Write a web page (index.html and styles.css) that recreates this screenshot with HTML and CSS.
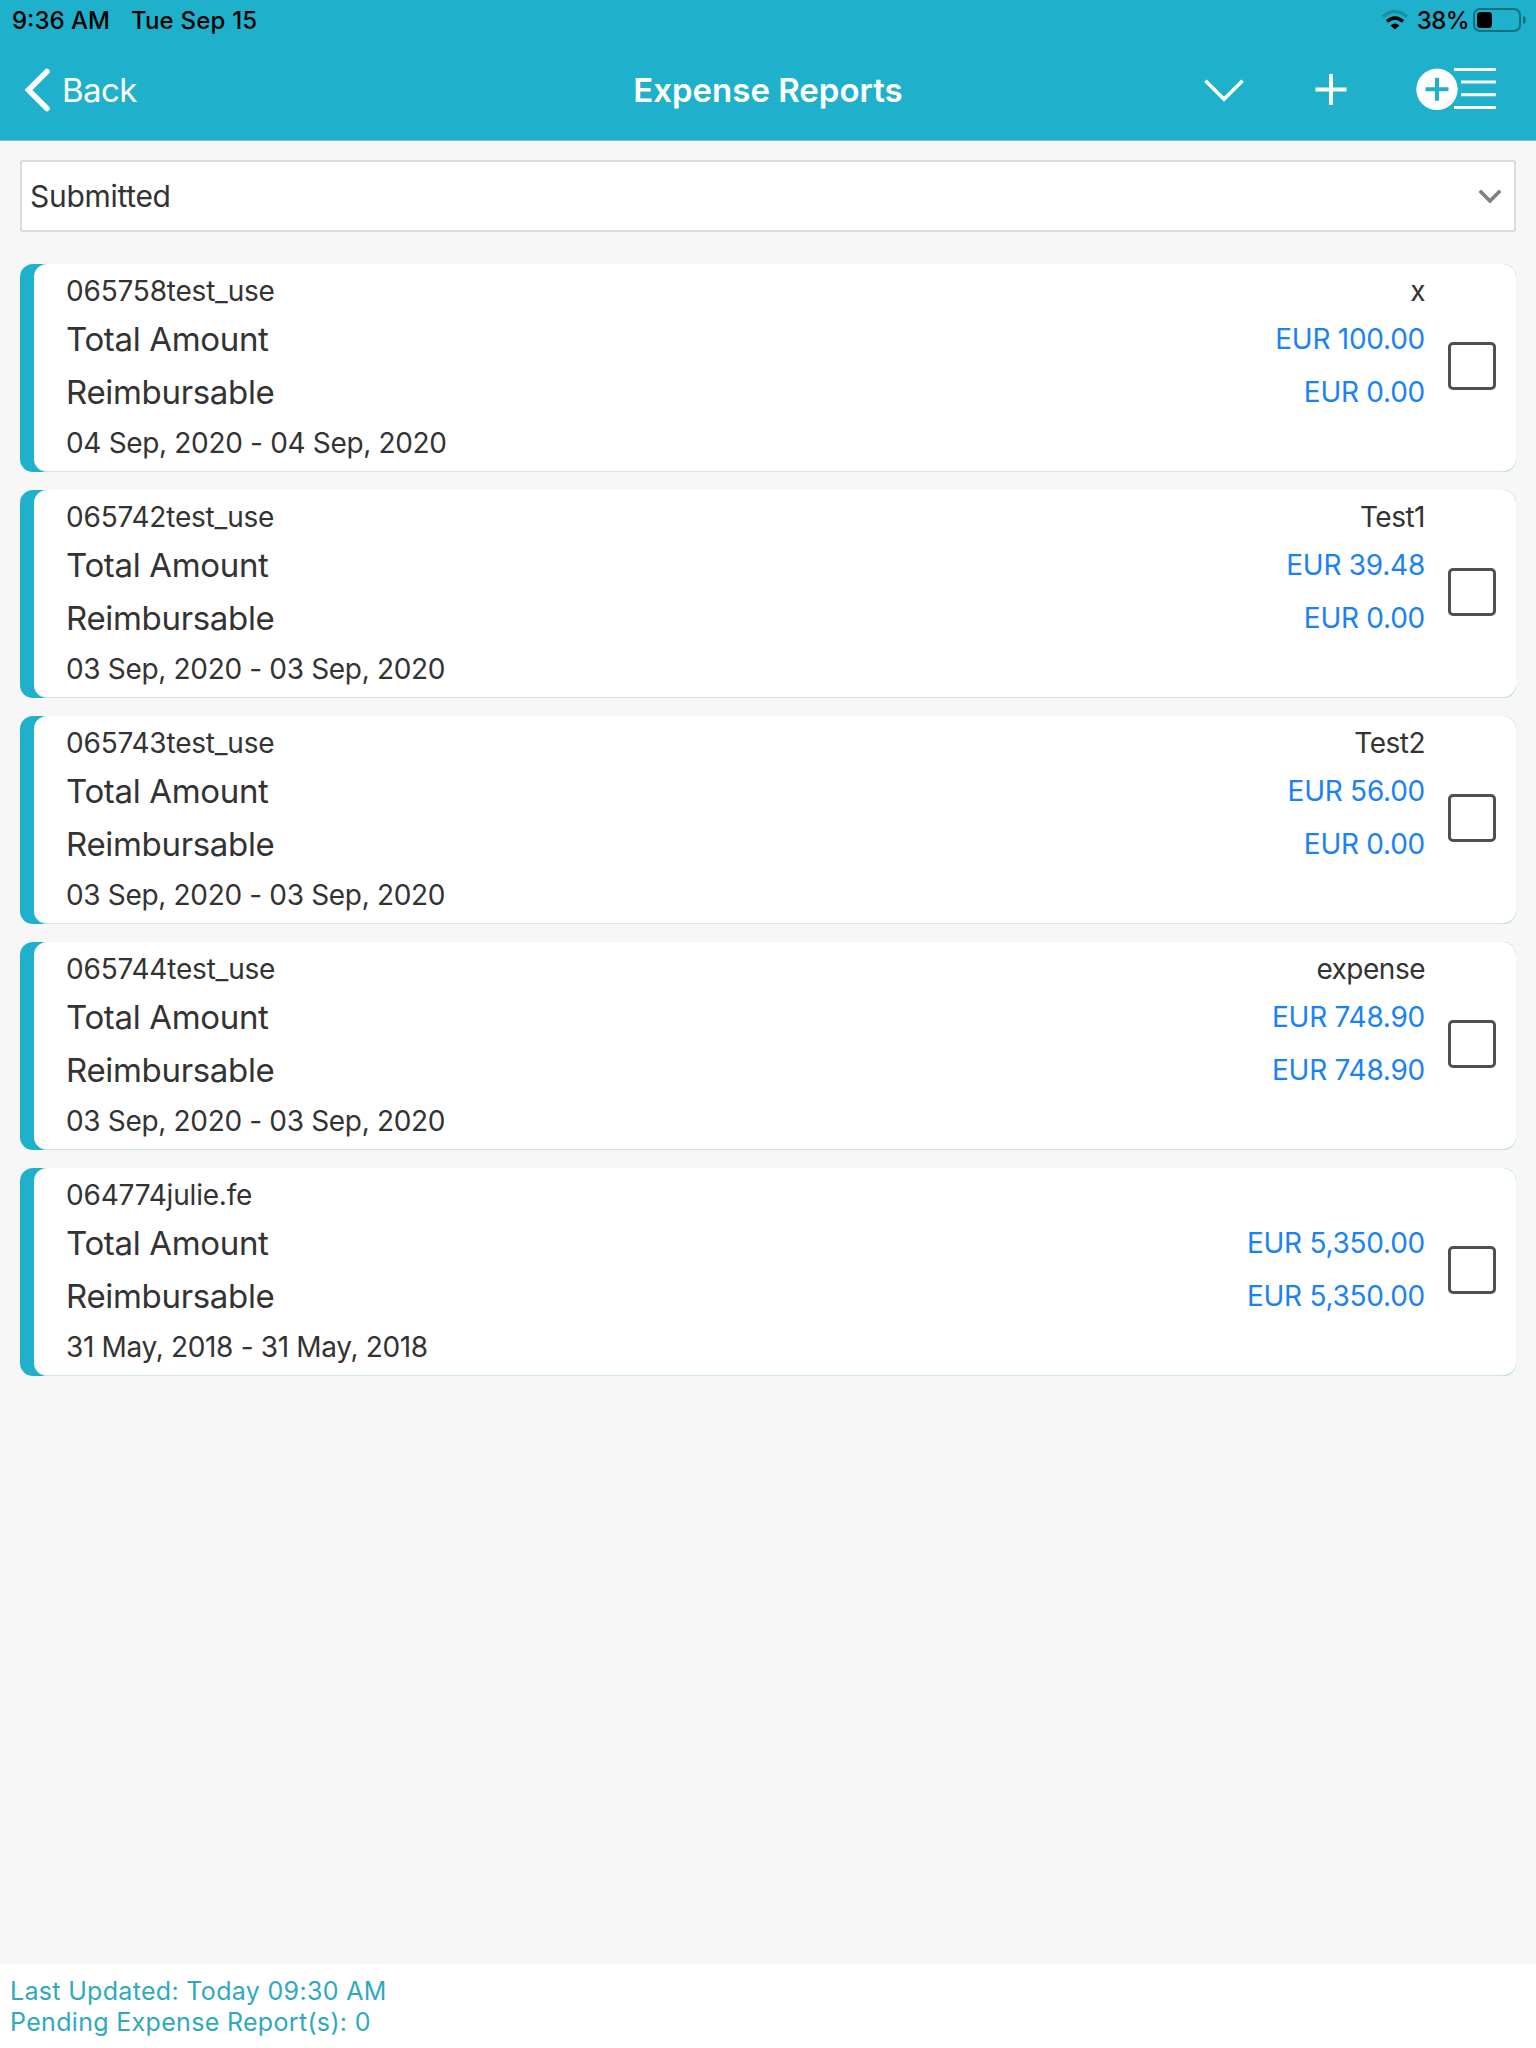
FILE: index.html
```html
<!DOCTYPE html>
<html lang="en">

<head>
    <meta charset="UTF-8">
    <meta name="viewport" content="width=device-width, initial-scale=1.0">
    <title>Expense Reports</title>
    <link rel="stylesheet" href="styles.css">
</head>

<body>
    <header>
        <div class="status-bar">
            <div class="status-left">
                <span class="time">9:36 AM</span>
                <span class="date">Tue Sep 15</span>
            </div>
            <div class="status-right">
                <svg class="wifi" width="28" height="20" viewBox="0 0 28 20">
                    <path d="M2 6.5 Q14 -3.5 26 6.5" fill="none" stroke="#1590a4" stroke-width="3.4" />
                    <path d="M6 11.5 Q14 4.5 22 11.5" fill="none" stroke="#000" stroke-width="3.6" />
                    <path d="M9.6 15.4 Q14 11.6 18.4 15.4 L14 19.6 Z" fill="#000" />
                </svg>
                <span class="percent">38%</span>
                <svg class="battery" width="53" height="24" viewBox="0 0 53 24">
                    <rect x="1" y="1" width="46" height="22" rx="6" fill="none" stroke="#12717f" stroke-width="2" />
                    <rect x="4" y="4" width="15" height="16" rx="3.5" fill="#000" />
                    <path d="M50 8 Q53 9 53 12 Q53 15 50 16 Z" fill="#12717f" />
                </svg>
            </div>
        </div>
        <nav class="nav-bar">
            <a class="back">
                <svg width="26" height="44" viewBox="0 0 26 44">
                    <path d="M22 3.5 L3.5 22 L22 40.5" fill="none" stroke="#fff" stroke-width="5.5" stroke-linecap="round" />
                </svg>
                <span>Back</span>
            </a>
            <h1>Expense Reports</h1>
            <div class="actions">
                <svg width="40" height="24" viewBox="0 0 40 24">
                    <path d="M1.5 2.8 L20 21.3 L38.5 2.8" fill="none" stroke="#fff" stroke-width="3.6" />
                </svg>
                <svg class="plus" width="32" height="32" viewBox="0 0 32 32">
                    <path d="M16 0 V31 M0.5 15.5 H31.5" fill="none" stroke="#fff" stroke-width="4" />
                </svg>
                <svg width="80" height="44" viewBox="0 0 80 44">
                    <circle cx="21" cy="21.3" r="20.7" fill="#fff" />
                    <path d="M21 9.8 V32.8 M9.5 21.3 H32.5" stroke="#1fb1cb" stroke-width="4" />
                    <path d="M38 1.6 H80 M45 14.1 H80 M45 26.8 H80 M38 39.4 H80" stroke="#fff" stroke-width="3" />
                </svg>
            </div>
        </nav>
    </header>

    <main>
        <div class="filter">
            <span>Submitted</span>
            <svg width="24" height="18" viewBox="0 0 24 18">
                <path d="M1.8 3.8 L12 14 L22.2 3.8" fill="none" stroke="#7f7f7f" stroke-width="3.6" />
            </svg>
        </div>

        <div class="reports">
            <div class="card">
                <div class="info">
                    <div class="row small"><span class="code">065758test_use</span><span class="name">x</span></div>
                    <div class="row"><span>Total Amount</span><span class="amount">EUR 100.00</span></div>
                    <div class="row"><span>Reimbursable</span><span class="amount">EUR 0.00</span></div>
                    <div class="row small last"><span class="dates">04 Sep, 2020 - 04 Sep, 2020</span></div>
                </div>
                <div class="checkbox"></div>
            </div>

            <div class="card">
                <div class="info">
                    <div class="row small"><span class="code">065742test_use</span><span class="name">Test1</span></div>
                    <div class="row"><span>Total Amount</span><span class="amount">EUR 39.48</span></div>
                    <div class="row"><span>Reimbursable</span><span class="amount">EUR 0.00</span></div>
                    <div class="row small last"><span class="dates">03 Sep, 2020 - 03 Sep, 2020</span></div>
                </div>
                <div class="checkbox"></div>
            </div>

            <div class="card">
                <div class="info">
                    <div class="row small"><span class="code">065743test_use</span><span class="name">Test2</span></div>
                    <div class="row"><span>Total Amount</span><span class="amount">EUR 56.00</span></div>
                    <div class="row"><span>Reimbursable</span><span class="amount">EUR 0.00</span></div>
                    <div class="row small last"><span class="dates">03 Sep, 2020 - 03 Sep, 2020</span></div>
                </div>
                <div class="checkbox"></div>
            </div>

            <div class="card">
                <div class="info">
                    <div class="row small"><span class="code">065744test_use</span><span class="name">expense</span></div>
                    <div class="row"><span>Total Amount</span><span class="amount">EUR 748.90</span></div>
                    <div class="row"><span>Reimbursable</span><span class="amount">EUR 748.90</span></div>
                    <div class="row small last"><span class="dates">03 Sep, 2020 - 03 Sep, 2020</span></div>
                </div>
                <div class="checkbox"></div>
            </div>

            <div class="card">
                <div class="info">
                    <div class="row small"><span class="code">064774julie.fe</span></div>
                    <div class="row"><span>Total Amount</span><span class="amount">EUR 5,350.00</span></div>
                    <div class="row"><span>Reimbursable</span><span class="amount">EUR 5,350.00</span></div>
                    <div class="row small last"><span class="dates">31 May, 2018 - 31 May, 2018</span></div>
                </div>
                <div class="checkbox"></div>
            </div>
        </div>
    </main>

    <footer>
        <p>Last Updated: Today 09:30 AM</p>
        <p>Pending Expense Report(s): 0</p>
    </footer>
</body>

</html>
```
FILE: styles.css
```css
* {
    margin: 0;
    padding: 0;
    box-sizing: border-box;
}

body {
    font-family: Inter, "Liberation Sans", sans-serif;
    background: #f7f7f7;
    color: #333;
    height: 100vh;
    display: flex;
    flex-direction: column;
    overflow: hidden;
}

svg {
    display: block;
    flex-shrink: 0;
}

header {
    height: 141px;
    background: #1fb1cb;
    border-bottom: 1px solid #8fb3ba;
}

.status-bar {
    height: 40px;
    padding: 0 10px 0 12px;
    display: flex;
    justify-content: space-between;
    color: #000;
    font-size: 24px;
    font-weight: 500;
    line-height: 40px;
}

.status-left,
.status-right {
    display: flex;
    align-items: center;
}

.status-left {
    padding-top: 1px;
    gap: 21px;
}

.date {
    letter-spacing: 0.2px;
}

.wifi {
    margin-right: 8px;
}

.percent {
    padding-top: 1px;
    margin-right: 4px;
    letter-spacing: -0.6px;
}

.nav-bar {
    height: 100px;
    padding: 0 25px;
    display: grid;
    grid-template-columns: 1fr auto 1fr;
    align-items: center;
    color: #fff;
}

.back {
    display: flex;
    align-items: center;
    gap: 11px;
    font-size: 33px;
    letter-spacing: -0.6px;
}

h1 {
    font-size: 33px;
    font-weight: 600;
}

.actions {
    margin-right: 15px;
    display: flex;
    justify-content: flex-end;
    align-items: center;
    gap: 69px;
}

.plus {
    margin-left: 2px;
}

main {
    flex: 1;
    padding: 19px 20px 0;
}

.filter {
    height: 72px;
    padding: 0 12px 0 8px;
    display: flex;
    justify-content: space-between;
    align-items: center;
    background: #fff;
    border: 2px solid #dcdcdc;
    border-radius: 3px;
    font-size: 30px;
    letter-spacing: -0.3px;
}

.reports {
    margin-top: 32px;
    display: flex;
    flex-direction: column;
    gap: 18px;
}

.card {
    height: 208px;
    padding-left: 14px;
    background: #1fb1cb;
    border-radius: 13px;
    display: flex;
    position: relative;
}

.info {
    flex: 1;
    padding: 5px 91px 0 32px;
    background: #fff;
    border-bottom: 1px solid #cfe6e6;
    border-radius: 13px;
}

.row {
    height: 53px;
    display: flex;
    justify-content: space-between;
    align-items: center;
    font-size: 33px;
    letter-spacing: -0.33px;
}

.small {
    height: 43px;
    font-size: 28px;
}

.code {
    letter-spacing: -0.2px;
}

.name {
    letter-spacing: -0.5px;
}

.last {
    height: 49px;
}

.amount {
    color: #1a82f7;
    font-size: 28px;
    letter-spacing: -0.25px;
}

.checkbox {
    position: absolute;
    top: 78px;
    right: 20px;
    width: 48px;
    height: 48px;
    border: 3px solid #505050;
    border-radius: 5px;
}

footer {
    height: 84px;
    padding: 12px 10px 0;
    background: #fff;
    color: #2fa9be;
    font-size: 25px;
    line-height: 31px;
    letter-spacing: 0.32px;
}
```
